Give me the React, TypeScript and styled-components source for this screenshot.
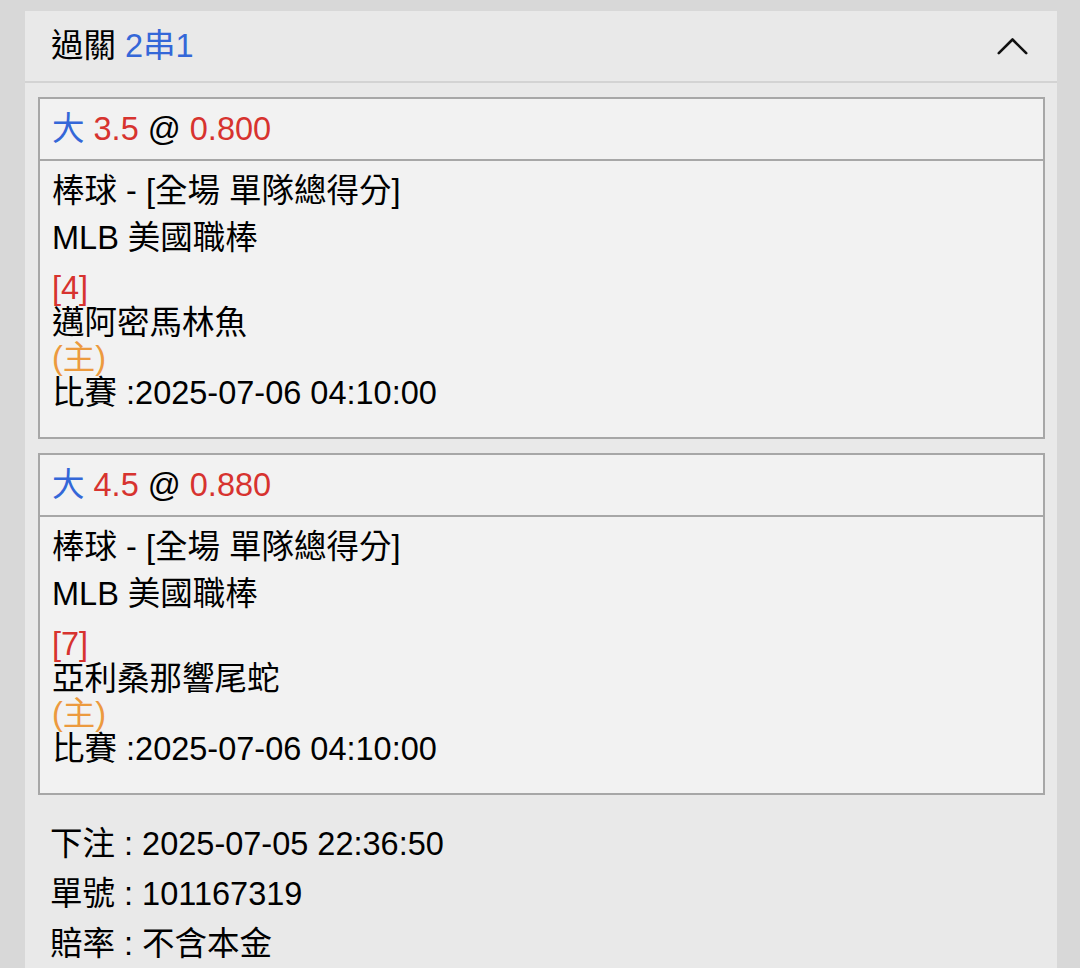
import React from "react";
import styled, { createGlobalStyle } from "styled-components";

const GlobalStyle = createGlobalStyle`
  html, body {
    margin: 0;
    padding: 0;
    background: #d8d8d8;
  }
  body {
    font-family: "Liberation Sans", Arial, "Noto Sans CJK TC", sans-serif;
    color: #000;
  }
`;

const Page = styled.div`
  width: 1080px;
  height: 968px;
  overflow: hidden;
  box-sizing: border-box;
  padding: 11px 23px 0 25px;
  background: #d8d8d8;
`;

const Panel = styled.section`
  background: #e9e9e9;
  min-height: 957px;
`;

const Header = styled.header`
  display: flex;
  align-items: center;
  justify-content: space-between;
  height: 70px;
  padding: 0 29px 0 26px;
  border-bottom: 2px solid #d3d3d3;
  font-size: 32.5px;
`;

const Title = styled.div`
  line-height: 1;
  white-space: pre;
`;

const Blue = styled.span`
  color: #3467d8;
`;

const Red = styled.span`
  color: #d7332f;
`;

const Orange = styled.span`
  color: #ec9a3e;
`;

const Body = styled.div`
  padding: 14px 12px 0 13px;
  display: flex;
  flex-direction: column;
  gap: 14px;
`;

const Card = styled.div`
  background: #f2f2f2;
  border: 2px solid #a7a7a7;
`;

const CardHead = styled.div`
  height: 60px;
  line-height: 60px;
  padding: 0 12px;
  border-bottom: 2px solid #a7a7a7;
  font-size: 32.5px;
  white-space: pre;
`;

const CardBody = styled.div`
  padding: 7px 12px 26px;
  font-size: 32.5px;
`;

const Line = styled.div`
  line-height: 47px;
  white-space: nowrap;
`;

const Team = styled.div`
  margin-top: 9px;
  line-height: 35px;
  white-space: nowrap;
`;

const Footer = styled.div`
  padding: 24px 25px 0;
  font-size: 32.5px;
`;

const FootLine = styled.div`
  line-height: 50px;
  white-space: nowrap;
`;

const Chevron = () => (
  <svg width="31" height="18" viewBox="0 0 31 18" fill="none">
    <polyline
      points="1.8,16.2 15.5,2.5 29.2,16.2"
      stroke="#111"
      strokeWidth="2.6"
      strokeLinecap="round"
      strokeLinejoin="round"
    />
  </svg>
);

type Bet = {
  line: string;
  odds: string;
  rank: string;
  team: string;
  time: string;
};

const bets: Bet[] = [
  { line: "3.5", odds: "0.800", rank: "[4]", team: "邁阿密馬林魚", time: "2025-07-06 04:10:00" },
  { line: "4.5", odds: "0.880", rank: "[7]", team: "亞利桑那響尾蛇", time: "2025-07-06 04:10:00" },
];

export default function App() {
  return (
    <>
      <GlobalStyle />
      <Page>
        <Panel>
          <Header>
            <Title>
              過關 <Blue>2串1</Blue>
            </Title>
            <Chevron />
          </Header>
          <Body>
            {bets.map((b) => (
              <Card key={b.rank}>
                <CardHead>
                  <Blue>大</Blue>{" "}<Red>{b.line}</Red>{" @ "}<Red>{b.odds}</Red>
                </CardHead>
                <CardBody>
                  <Line>棒球 - [全場 單隊總得分]</Line>
                  <Line>MLB 美國職棒</Line>
                  <Team>
                    <div>
                      <Red>{b.rank}</Red>
                    </div>
                    <div>{b.team}</div>
                    <div>
                      <Orange>(主)</Orange>
                    </div>
                    <div>比賽 :{b.time}</div>
                  </Team>
                </CardBody>
              </Card>
            ))}
          </Body>
          <Footer>
            <FootLine>下注 : 2025-07-05 22:36:50</FootLine>
            <FootLine>單號 : 101167319</FootLine>
            <FootLine>賠率 : 不含本金</FootLine>
          </Footer>
        </Panel>
      </Page>
    </>
  );
}
